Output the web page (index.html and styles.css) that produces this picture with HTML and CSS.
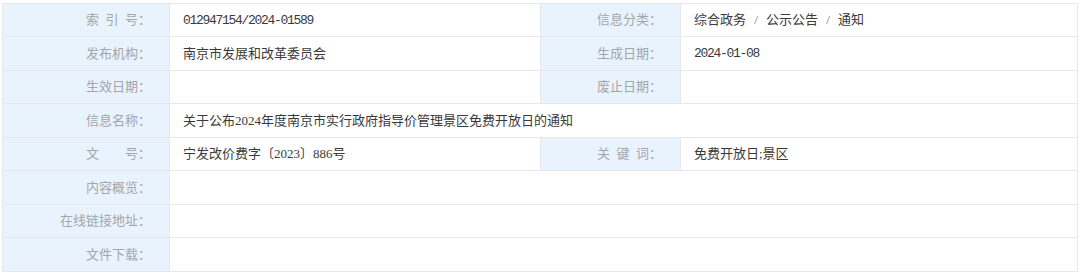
FILE: index.html
```html
<!DOCTYPE html>
<html lang="zh-CN">
<head>
<meta charset="utf-8">
<title>信息公开</title>
<link rel="stylesheet" href="styles.css">
</head>
<body>
<div class="wrap">
<table class="info">
  <colgroup>
    <col class="c-l1"><col class="c-v1"><col class="c-l2"><col class="c-v2">
  </colgroup>
  <tr>
    <th>索&ensp;引&ensp;号：</th><td><span class="mono">012947154/2024-01589</span></td>
    <th>信息分类：</th><td>综合政务<span class="sep">/</span>公示公告<span class="sep">/</span>通知</td>
  </tr>
  <tr>
    <th>发布机构：</th><td>南京市发展和改革委员会</td>
    <th>生成日期：</th><td><span class="mono">2024-01-08</span></td>
  </tr>
  <tr>
    <th>生效日期：</th><td></td>
    <th>废止日期：</th><td></td>
  </tr>
  <tr>
    <th>信息名称：</th><td colspan="3">关于公布2024年度南京市实行政府指导价管理景区免费开放日的通知</td>
  </tr>
  <tr>
    <th>文　　号：</th><td>宁发改价费字〔2023〕886号</td>
    <th>关&ensp;键&ensp;词：</th><td>免费开放日;景区</td>
  </tr>
  <tr>
    <th>内容概览：</th><td colspan="3"></td>
  </tr>
  <tr>
    <th>在线链接地址：</th><td colspan="3"></td>
  </tr>
  <tr>
    <th>文件下载：</th><td colspan="3"></td>
  </tr>
</table>
</div>
</body>
</html>
```

FILE: styles.css
```css
html, body {
  margin: 0;
  padding: 0;
  background: #ffffff;
}

.wrap {
  padding: 3px 3px 0 2px;
}

.info {
  width: 1075px;
  border-collapse: collapse;
  table-layout: fixed;
  font-family: "Liberation Serif", "Noto Sans CJK SC", serif;
  font-size: 13px;
}

.c-l1 { width: 167px; }
.c-v1 { width: 371px; }
.c-l2 { width: 140px; }
.c-v2 { width: 397px; }

.info tr { height: 33px; }
.info tr:nth-child(even) { height: 34px; }

.info th,
.info td {
  border: 1px solid #e6e8eb;
  padding: 0;
  vertical-align: middle;
  white-space: nowrap;
  line-height: 16px;
}

.info th {
  background: #e9f3fd;
  color: #a3a6aa;
  font-weight: normal;
  text-align: right;
  padding-right: 18px;
}

.info td {
  background: #ffffff;
  color: #3a3a3a;
  text-align: left;
  padding-left: 13px;
}

.mono {
  font-family: "Liberation Mono", monospace;
  letter-spacing: -1.3px;
}

.sep {
  display: inline-block;
  width: 20px;
  text-align: center;
  color: #777;
}
```
